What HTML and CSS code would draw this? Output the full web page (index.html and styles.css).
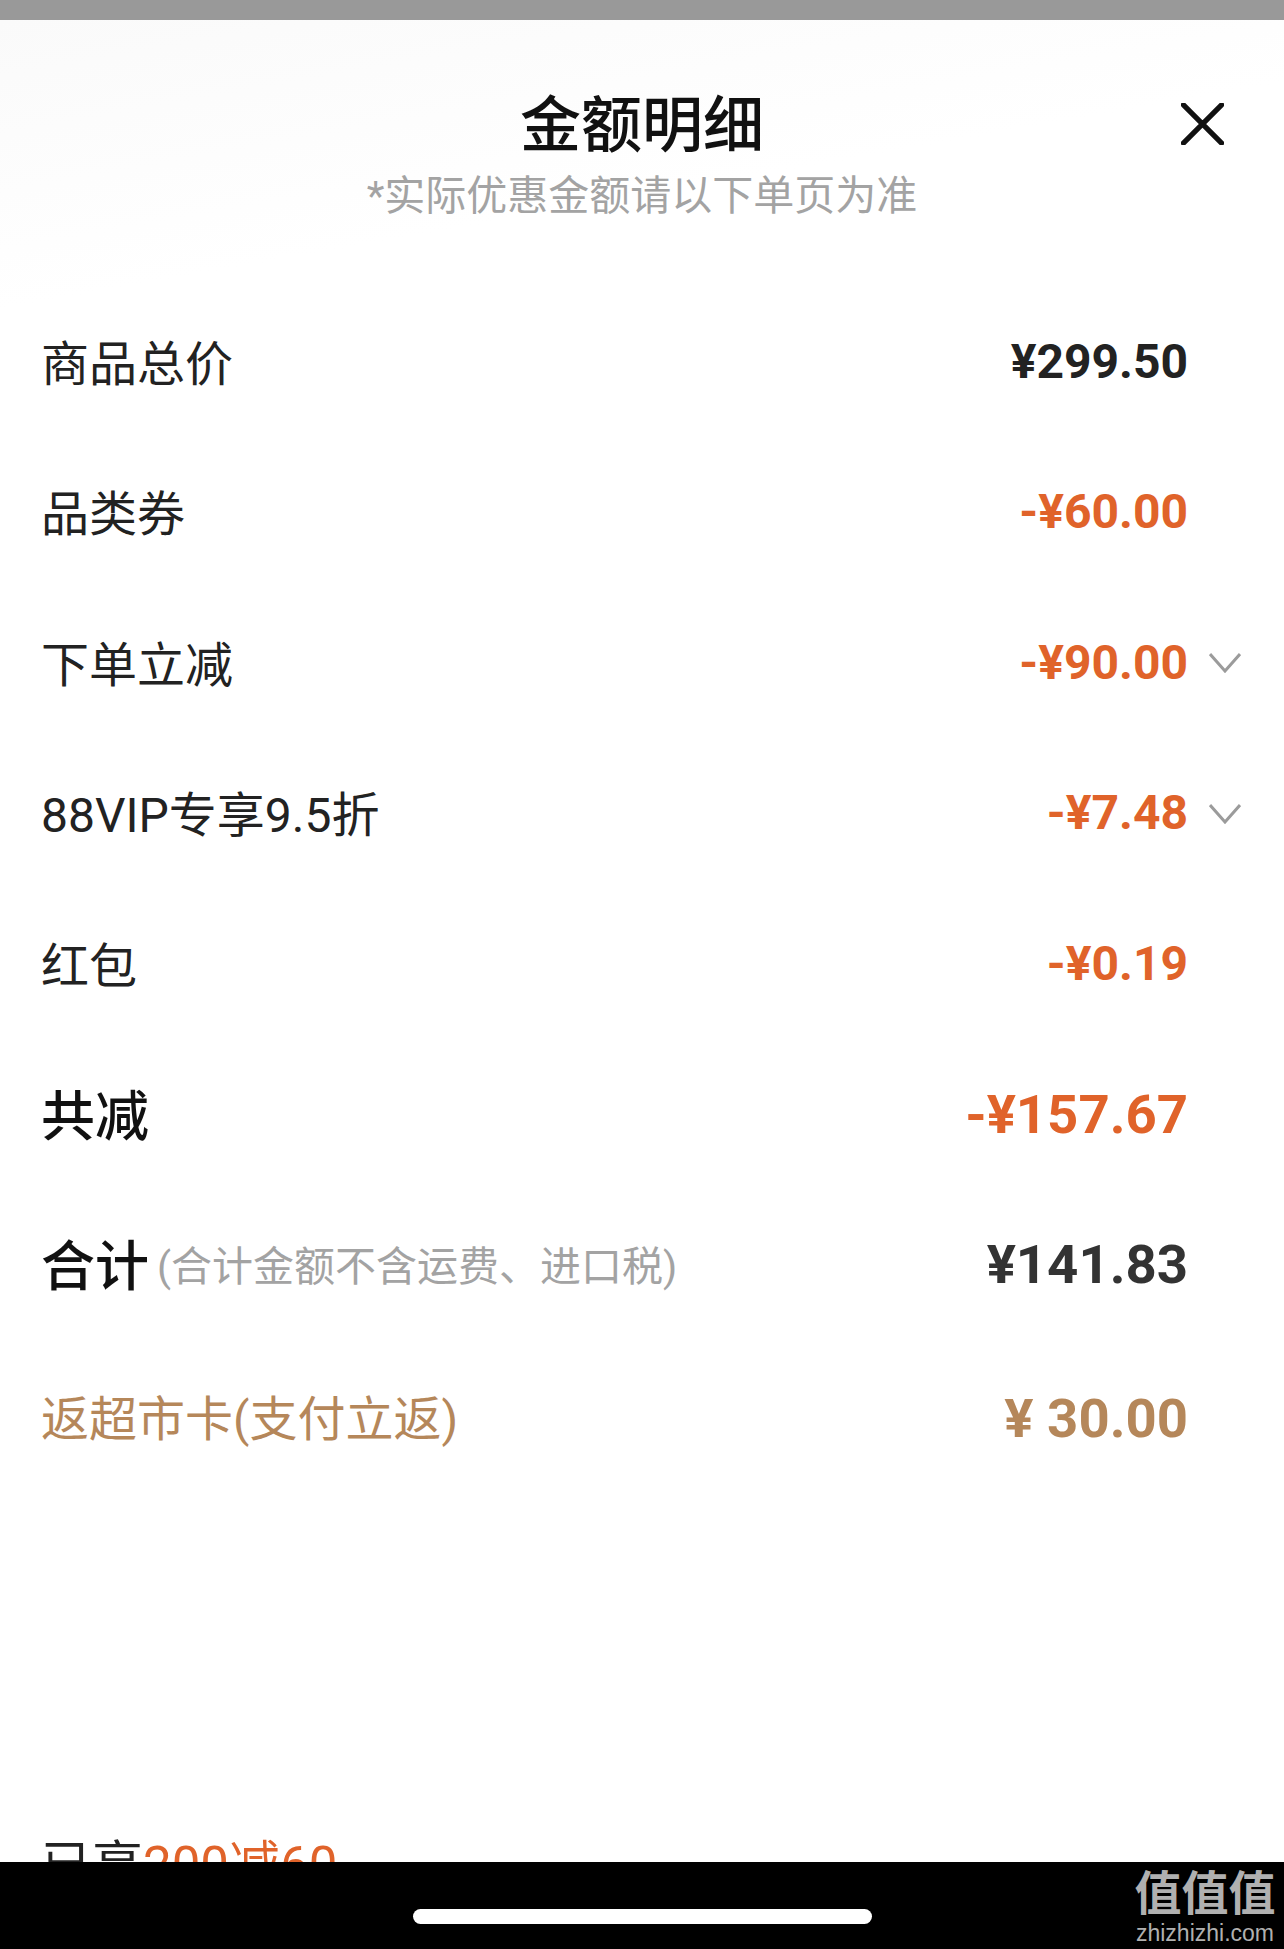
FILE: index.html
```html
<!DOCTYPE html>
<html lang="zh-CN">
<head>
<meta charset="utf-8">
<title>金额明细</title>
<link rel="stylesheet" href="styles.css">
</head>
<body>
<div class="screen">
  <div class="scrim"></div>
  <main class="sheet">
    <header class="head">
      <h1 class="title">金额明细</h1>
      <p class="subtitle">*实际优惠金额请以下单页为准</p>
      <svg class="close" viewBox="0 0 44 44" aria-label="关闭"><path d="M2 2 L42 42 M42 2 L2 42"/></svg>
    </header>
    <section class="rows">
      <div class="row"><span class="label">商品总价</span><span class="amount">¥299.50</span></div>
      <div class="row"><span class="label">品类券</span><span class="amount minus">-¥60.00</span></div>
      <div class="row"><span class="label">下单立减</span><span class="amount minus">-¥90.00</span><svg class="chev" viewBox="0 0 32 20"><path d="M1 1 L16 18 L31 1"/></svg></div>
      <div class="row"><span class="label">88VIP专享9.5折</span><span class="amount minus">-¥7.48</span><svg class="chev" viewBox="0 0 32 20"><path d="M1 1 L16 18 L31 1"/></svg></div>
      <div class="row"><span class="label">红包</span><span class="amount minus">-¥0.19</span></div>
      <div class="row"><span class="label strong">共减</span><span class="amount minus big">-¥157.67</span></div>
      <div class="row"><span class="label strong">合计</span><span class="note">(合计金额不含运费、进口税)</span><span class="amount total big">¥141.83</span></div>
      <div class="row gold"><span class="label">返超市卡(支付立返)</span><span class="amount big">¥ 30.00</span></div>
    </section>
    <p class="promo">已享<span class="promo-hl">200减60</span></p>
  </main>
  <footer class="navbar">
    <div class="home-pill"></div>
    <div class="mark"><div class="mark-cn">值值值</div><div class="mark-en">zhizhizhi.com</div></div>
  </footer>
</div>
</body>
</html>
```
FILE: styles.css
```css
* { box-sizing: border-box; margin: 0; padding: 0; }
html, body { background: #000; }
.screen {
  width: 1284px; height: 1949px; display: flex; flex-direction: column; overflow: hidden;
  font-family: Roboto, "Noto Sans CJK SC", sans-serif;
}
.scrim { height: 20px; flex: none; background: #999; }
.sheet {
  flex: 1; min-height: 0; overflow: hidden; padding: 0 0 0 41px;
  background: linear-gradient(170deg, #fafafa 0, #fff 14%);
}
.head { position: relative; height: 266px; margin-left: -41px; padding-top: 67px; text-align: center; }
.title { font-size: 61px; line-height: 78px; font-weight: 500; color: #111; }
.subtitle { font-size: 41px; line-height: 62px; font-weight: 400; color: #a3a3a3; }
.close { position: absolute; left: 1181px; top: 83px; width: 43px; height: 42px; fill: none; stroke: #111; stroke-width: 5.5; }
.close path { stroke-linecap: round; }
.rows { display: flex; flex-direction: column; }
.row { height: 150.5px; display: flex; align-items: center; padding-right: 96px; position: relative; }
.label { font-size: 48px; font-weight: 400; color: #222; white-space: nowrap; margin-bottom: 3px; }
.strong { font-size: 54px; font-weight: 500; color: #111; }
.note { font-size: 41px; font-weight: 400; color: #a3a3a3; margin-left: 8px; margin-bottom: 2px; white-space: nowrap; }
.amount { margin-left: auto; font-family: Roboto, sans-serif; font-size: 48px; font-weight: 700; color: #222; white-space: nowrap; }
.big { font-size: 54.5px; }
.minus { color: #e0632a; }
.total { color: #333; }
.gold { margin-top: 3px; }
.gold .label, .gold .amount { color: #b5875a; }
.gold .label { margin-bottom: 5px; }
.chev { position: absolute; left: 1168px; top: 50%; width: 32px; height: 20px; margin-top: -9px; fill: none; stroke: #9b9b9b; stroke-width: 3; }
.promo { margin-top: 343px; font-size: 51px; line-height: 60px; color: #222; white-space: nowrap; }
.promo-hl { color: #e0632a; }
.navbar { height: 87px; flex: none; background: #000; display: flex; justify-content: center; position: relative; padding-top: 47px; }
.home-pill { width: 459px; height: 15px; border-radius: 8px; background: #fff; }
.mark { position: absolute; left: 1134px; top: 6px; width: 142px; text-align: center; color: #b0b0b0; }
.mark-cn { font-size: 47px; line-height: 52px; font-weight: 700; white-space: nowrap; }
.mark-en { font-family: "Liberation Sans", sans-serif; font-size: 23px; line-height: 26px; white-space: nowrap; }
```
